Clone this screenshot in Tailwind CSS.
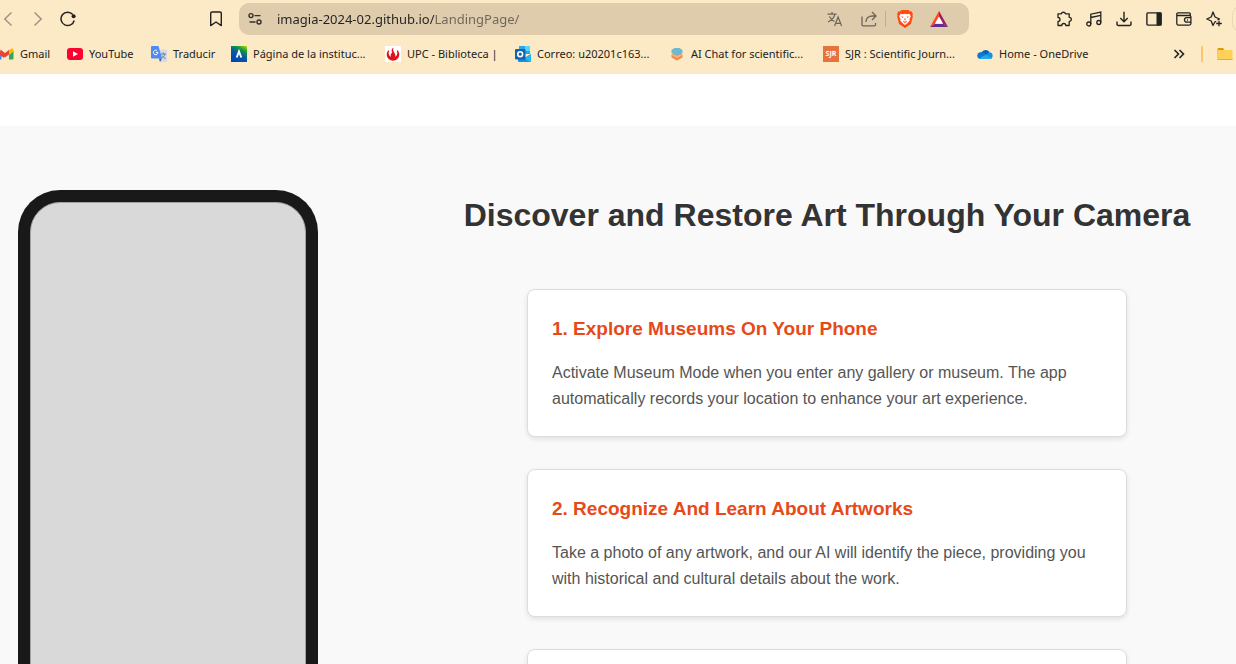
<!DOCTYPE html>
<html lang="en">
<head>
<meta charset="utf-8">
<meta name="viewport" content="width=device-width, initial-scale=1">
<title>Imagia</title>
<script src="https://cdn.jsdelivr.net/npm/@tailwindcss/browser@4"></script>
</head>
<body class="flex h-screen flex-col overflow-hidden bg-white font-['Liberation_Sans',Arial,sans-serif]">
<header class="shrink-0 overflow-hidden bg-[#fce9c6] pt-[3px] pb-[10px] font-['Noto_Sans','Open_Sans',sans-serif] text-[#222222]">
  <div class="flex h-8 items-center">
    <nav aria-label="Navigation" class="flex w-[239px] shrink-0 items-center gap-[14px] pr-[15px]">
      <button aria-label="Back" class="size-4 text-[#a09480]"><svg viewBox="0 0 16 16" class="size-4" fill="none" stroke="currentColor" stroke-width="1.500"><path d="M11.500 1.500 4.800 8l6.700 6.500"/></svg></button>
      <button aria-label="Forward" class="size-4 text-[#a09480]"><svg viewBox="0 0 16 16" class="size-4" fill="none" stroke="currentColor" stroke-width="1.500"><path d="M4.500 1.500 11.200 8l-6.700 6.500"/></svg></button>
      <button aria-label="Reload" class="size-4"><svg viewBox="0 0 16 16" class="size-4" fill="none" stroke="currentColor" stroke-width="1.500"><path d="M14.200 9.500A6.700 6.700 0 1 1 12.800 3.500"/><circle cx="13.600" cy="5.300" r="2" fill="currentColor" stroke="none"/></svg></button>
      <button aria-label="Bookmark" class="ml-auto size-4"><svg viewBox="0 0 16 16" class="size-4" fill="none" stroke="currentColor" stroke-width="1.400" stroke-linejoin="round"><path d="M4 1h8a1.300 1.300 0 0 1 1.300 1.300V14.600L8 11 2.700 14.600V2.300A1.300 1.300 0 0 1 4 1Z"/></svg></button>
    </nav>
    <div class="flex h-8 min-w-0 flex-1 items-center rounded-[10px] bg-[#deccad] pr-[21px] pl-2 text-[#6c6558]">
      <button aria-label="Site settings" class="size-4 text-[#33302a]"><svg viewBox="0 0 16 16" class="size-4" fill="none" stroke="currentColor" stroke-width="1.400"><circle cx="4" cy="4.600" r="2"/><path d="M7.500 4.600h6M2.500 11h6"/><circle cx="12" cy="11" r="2"/></svg></button>
      <input aria-label="Address" value="imagia-2024-02.github.io/LandingPage/" class="ml-[14px] min-w-0 flex-1 bg-[linear-gradient(90deg,#222222_158px,#6c6558_158px)] bg-clip-text text-[13px] leading-5 text-transparent outline-none">
      <button aria-label="Translate" class="size-4"><svg viewBox="0 0 16 16" class="size-4" fill="none" stroke="currentColor" stroke-width="1.200"><path d="M.5 3.200h9M5 1v2.200M8 3.200C7.200 6.500 4.500 9.500 1 11M2.500 5.500C3.500 8 5 9.500 7.500 10.500M7.600 15l3.500-9 3.500 9M8.800 12.300h4.700"/></svg></button>
      <button aria-label="Share" class="ml-[18px] size-4"><svg viewBox="0 0 16 16" class="size-4" fill="none" stroke="currentColor" stroke-width="1.300"><path d="M1 5.500v8.300a1 1 0 0 0 1 1h11.500a1 1 0 0 0 1-1V12M11 1l4 4-4 4M15 5h-3.500C7.500 5 5 7.200 5 11"/></svg></button>
      <span class="mx-2 h-4 w-px bg-[#bdb09b]"></span>
      <button aria-label="Brave Shields" class="ml-[3px] h-[18px] w-4"><svg viewBox="0 0 16 18" class="h-[18px] w-4"><path d="M4.500 0h7l1.500 1.500 1.500-.2L16 4l-.6 1.500.4 1.200-1.900 7.300L8 18l-5.900-4L.2 6.700l.4-1.200L0 4l1.500-2.700 1.500.2Z" fill="#ff4a12"/><path d="m3.600 3.800 2.400.4 2-.5 2 .5 2.400-.4 1.400 2.400-1.300 3 .2 1.600L10 13.600 8 15l-2-1.400-2.700-2.800.2-1.600-1.300-3Z" fill="#fff"/><path d="m4 6.300 2.400.4-.6 1.200ZM12 6.300l-2.400.4.600 1.200ZM8 7.500l.7 2.200L8 10.500l-.7-.8ZM5.800 10.800l2.200 1 2.200-1-.8 1.400L8 13l-1.400-.8Z" fill="#ff4a12"/></svg></button>
      <button aria-label="Brave Rewards" class="ml-[17px] h-4 w-[18px]"><svg viewBox="0 0 18 16" class="h-4 w-[18px]"><path d="M9 0 0 16 5 12.700 9 5.500Z" fill="#ff4724"/><path d="m9 0 9 16-5-3.300L9 5.500Z" fill="#9e1f63"/><path d="M0 16h18l-5-3.300H5Z" fill="#662d91"/><path d="m9 5.500 4 7.200H5Z" fill="#fff"/></svg></button>
    </div>
    <div class="flex w-[267px] shrink-0 items-center gap-[14px] pl-[87px]">
      <button aria-label="Extensions" class="size-4 shrink-0"><svg viewBox="0 0 16 16" class="size-4" fill="none" stroke="currentColor" stroke-width="1.300" stroke-linejoin="round"><path d="M2 2.800h3.300a2.200 2.200 0 0 1 4.200 0h3.700v3.500a2.100 2.100 0 0 1 0 4.200v4H9.800a2 2 0 0 0-4 0H2v-4a2 2 0 0 0 0-4Z"/></svg></button>
      <button aria-label="Media" class="size-4 shrink-0"><svg viewBox="0 0 16 16" class="size-4" fill="none" stroke="currentColor" stroke-width="1.300"><circle cx="2.800" cy="13" r="2"/><circle cx="12.800" cy="11.500" r="2"/><path d="M4.800 13V3.200L14.800 1v10.500M4.800 6.500l10-2.200"/></svg></button>
      <button aria-label="Downloads" class="size-4 shrink-0"><svg viewBox="0 0 16 16" class="size-4" fill="none" stroke="currentColor" stroke-width="1.400"><path d="M8 .8v9.700M4.300 7 8 10.700 11.700 7M1 10.500v2.700a1.300 1.300 0 0 0 1.300 1.300h11.400a1.300 1.300 0 0 0 1.300-1.300v-2.700"/></svg></button>
      <button aria-label="Side panel" class="size-4 shrink-0"><svg viewBox="0 0 16 16" class="size-4"><rect x=".9" y="1.900" width="14.200" height="12.200" rx="1" fill="none" stroke="currentColor" stroke-width="1.400"/><path d="M10.500 1.500h5v13h-5z" fill="currentColor"/></svg></button>
      <button aria-label="Wallet" class="size-4 shrink-0"><svg viewBox="0 0 16 16" class="size-4" fill="none" stroke="currentColor" stroke-width="1.300"><path d="M14.300 4.500V3a1.200 1.200 0 0 0-1.200-1.200H2A1.300 1.300 0 0 0 .8 3.100v9.400a1.600 1.600 0 0 0 1.600 1.600h11a1.500 1.500 0 0 0 1.500-1.500V6a1.500 1.500 0 0 0-1.500-1.500H1M15 6.700h-4.300a2 2 0 0 0 0 4.500H15M11 9h1"/></svg></button>
      <button aria-label="Leo AI" class="size-4 shrink-0"><svg viewBox="0 0 16 16" class="size-4" fill="none" stroke="currentColor" stroke-width="1.300" stroke-linejoin="round"><path d="M10.200 10.300 8.800 11 7 14.500 5.200 10 .8 8 5.200 6 7 1l2 5 4.500 2-2 .9M13 9.700v5.600M10.200 12.500h5.600"/></svg></button>
      <span class="-ml-1 h-7 w-3 shrink-0 rounded-l-[10px] border border-r-0 border-[#e9d7b6]"></span>
    </div>
  </div>
  <div class="mt-[9px] flex h-5 items-center text-[11px] leading-5 whitespace-nowrap">
    <a href="#" class="flex w-[67px] shrink-0 items-center gap-[6px]"><svg viewBox="2 0 14 16" class="h-4 w-[14px]"><path d="M0 3.500V13.500h3.500V6Z" fill="#4285f4"/><path d="M0 3.500 6 8V12L0 7.500Z" fill="#ea4335"/><path d="m2.500 3.500 4.500 3.500 4.500-3.500V8L7 11.500 2.500 8Z" fill="#ea4335"/><path d="M11 5v8.500h3.500a1 1 0 0 0 1-1V5Z" fill="#34a853"/><path d="M11 4.500 13 2.800a1.500 1.500 0 0 1 2.500 1.200v1.500L11 9Z" fill="#fbbc04"/></svg>Gmail</a>
    <a href="#" class="flex w-[84px] shrink-0 items-center gap-[6px]"><svg viewBox="0 0 16 16" class="size-4"><rect y="2" width="16" height="12" rx="3" fill="#ff0033"/><path d="m6 5.200 5 2.800-5 2.800Z" fill="#fff"/></svg>YouTube</a>
    <a href="#" class="flex w-[80px] shrink-0 items-center gap-[6px]"><svg viewBox="0 0 16 16" class="size-4"><path d="M6 3.500h9a1 1 0 0 1 1 1V15a1 1 0 0 1-1 1H9Z" fill="#d5dbe2"/><path d="M9.500 8h5.500M12.200 6.500V8M14 8c-.5 2-2 3.500-4 4.500M11 9.500l3.500 3.500" stroke="#60819a" fill="none"/><path d="M8 12.500h3L9 16Z" fill="#3a4fc0"/><path d="M1 0h6.500L11 12.500H1a1 1 0 0 1-1-1V1a1 1 0 0 1 1-1Z" fill="#4c8bf5"/><path d="M6.300 4.800A2.300 2.300 0 1 0 7 6.600H4.800" stroke="#fff" fill="none"/></svg>Traducir</a>
    <a href="#" class="flex w-[154px] shrink-0 items-center gap-[6px]"><svg viewBox="0 0 16 16" class="size-4"><defs><linearGradient id="ins" x1="1" y1="0" x2=".4" y2="1"><stop offset="0" stop-color="#b8e600"/><stop offset=".3" stop-color="#14963f"/><stop offset=".6" stop-color="#0759a5"/><stop offset="1" stop-color="#0646b4"/></linearGradient></defs><path d="M0 0h16v16H0z" fill="url(#ins)"/><path d="M5.700 11.500 8 5.500 10.300 11.500" stroke="#fff" stroke-width="1.900" fill="none"/></svg>Página de la instituc...</a>
    <a href="#" class="flex w-[130px] shrink-0 items-center gap-[6px]"><svg viewBox="0 0 16 16" class="size-4"><path d="M0 0h16v16H0z" fill="#fff"/><path d="M3.300 4.200A6.300 6.300 0 1 0 12.700 4.200L11.800 5A4.600 4.600 0 0 1 10 10.900C10.800 9 10 7.500 9 6.300 8 5 7.800 3.500 8.600 1.500 6 3.300 6.400 5 7.200 6.400 6 7.300 5.300 9 6 10.900A4.600 4.600 0 0 1 4.200 5Z" fill="#e3101c"/></svg>UPC - Biblioteca |</a>
    <a href="#" class="flex w-[155px] shrink-0 items-center gap-[6px]"><svg viewBox="0 0 16 16" class="size-4"><path d="M4 0h11v8H4z" fill="#28a8ea"/><path d="M10 0h5v5h-5z" fill="#50d9ff"/><path d="M3 8l6.500 4L16 8v7a1 1 0 0 1-1 1H4a1 1 0 0 1-1-1Z" fill="#1490df"/><path d="m16 8-7 4.200 6 3.800a1 1 0 0 0 1-1Z" fill="#2bb4f2"/><rect y="3" width="10.500" height="10.500" rx="1" fill="#0f63b5"/><circle cx="5.200" cy="8.200" r="2.400" fill="none" stroke="#fff" stroke-width="1.600"/></svg>Correo: u20201c163...</a>
    <a href="#" class="flex w-[153px] shrink-0 items-center gap-[6px]"><svg viewBox="0 0 16 16" class="size-4"><path d="M1.500 8.500 7 7l5.500 1.500v3L7 14.500l-5.500-3Z" fill="#f58a4b"/><path d="m1.500 9 5.500-1 5.500 1L7 12Z" fill="#ffb178"/><path d="m1.500 4 3-2h5l3 2v3L7 10 1.500 7Z" fill="#6cb9d2"/></svg><span class="-ml-px">AI Chat for scientific...</span></a>
    <a href="#" class="flex w-[154px] shrink-0 items-center gap-[6px]"><span class="flex size-4 items-center justify-center bg-[#e6733e] text-[7px] font-bold text-white">SJR</span>SJR : Scientific Journ...</a>
    <a href="#" class="flex shrink-0 items-center gap-[6px]"><svg viewBox="0 0 16 16" class="size-4"><path d="M4.500 6.500A4.600 4.600 0 0 1 12.500 6l-3 4Z" fill="#0364b8"/><path d="M3.500 13A3.500 3.500 0 0 1 4 6.200c2-.3 3 .6 8.500 4.500L9 13Z" fill="#0f78d4"/><path d="M.2 9.800A3.500 3.500 0 0 1 4 6.200L9.500 9 3.500 13A3.500 3.500 0 0 1 .2 9.800Z" fill="#0f78d4"/><path d="M12.500 6.300A3.400 3.400 0 0 1 13 13H3.500L2 12.600 9.500 8Z" fill="#1490df"/><path d="M2 12.500 8.500 9l6.500 3c-.5.600-1.200 1-2 1H3.500Z" fill="#28a8ea"/></svg>Home - OneDrive</a>
    <button aria-label="More bookmarks" class="ml-auto size-3 shrink-0"><svg viewBox="0 0 12 12" class="size-3" fill="none" stroke="currentColor" stroke-width="1.600"><path d="m1.500 2 4 4-4 4M6.500 2l4 4-4 4"/></svg></button>
    <span class="mr-[14px] ml-4 h-4 w-[2px] shrink-0 bg-[#fcc56b]"></span>
    <button aria-label="All bookmarks" class="mr-[3px] size-4 shrink-0"><svg viewBox="0 0 16 16" class="size-4"><path d="M.5 3a1 1 0 0 1 1-1H6l1.500 2H15v9H.5Z" fill="#dc9a0b"/><rect x=".5" y="4" width="15" height="10" rx="1" fill="#ffd257"/><path d="M.5 13.500h15" stroke="#e9ae27"/></svg></button>
  </div>
</header>
<main class="min-h-0 flex-1 overflow-hidden pt-[52px]">
  <section class="flex items-start gap-[100px] bg-[#f9f9f9] py-16 pl-[18px]">
    <div class="h-[600px] w-[300px] shrink-0 rounded-[42px] bg-[#191919] p-3">
      <div class="h-full rounded-[30px] border border-[#a3a3a3] bg-[#d9d9d9]"></div>
    </div>
    <div class="flex min-w-0 flex-1 flex-col items-center">
      <h1 class="mb-12 text-center text-[32px] leading-[51px] font-bold text-[#333333]">Discover and Restore Art Through Your Camera</h1>
      <ol class="flex w-full max-w-[600px] flex-col gap-8">
        <li class="rounded-lg border border-[#dddddd] bg-white p-6 shadow-[0_2px_5px_rgba(0,0,0,0.1)]">
          <h2 class="mb-4 text-[19px] leading-[30px] font-bold text-[#e64a19]">1. Explore Museums On Your Phone</h2>
          <p class="text-base leading-[26px] text-[#555555]">Activate Museum Mode when you enter any gallery or museum. The app automatically records your location to enhance your art experience.</p>
        </li>
        <li class="rounded-lg border border-[#dddddd] bg-white p-6 shadow-[0_2px_5px_rgba(0,0,0,0.1)]">
          <h2 class="mb-4 text-[19px] leading-[30px] font-bold text-[#e64a19]">2. Recognize And Learn About Artworks</h2>
          <p class="text-base leading-[26px] text-[#555555]">Take a photo of any artwork, and our AI will identify the piece, providing you with historical and cultural details about the work.</p>
        </li>
        <li class="min-h-[148px] rounded-lg border border-[#dddddd] bg-white p-6 shadow-[0_2px_5px_rgba(0,0,0,0.1)]"></li>
      </ol>
    </div>
  </section>
</main>
</body>
</html>
